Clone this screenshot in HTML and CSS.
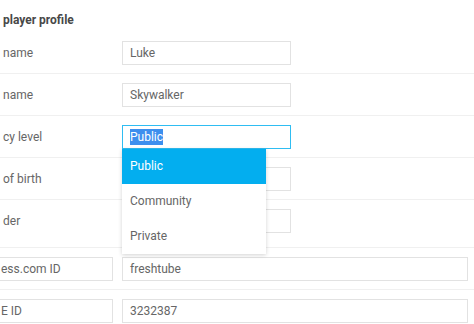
FILE: index.html
```html
<!DOCTYPE html>
<html lang="en">

<head>
    <meta charset="UTF-8">
    <meta name="viewport" content="width=device-width, initial-scale=1.0">
    <title>Player profile</title>
    <link rel="stylesheet" href="styles.css">
</head>

<body>
    <div class="page">
        <h2 class="title">player profile</h2>

        <div class="section">
            <div class="row">
                <div class="label">name</div>
                <div class="field">Luke</div>
            </div>
            <div class="row">
                <div class="label">name</div>
                <div class="field">Skywalker</div>
            </div>
            <div class="row">
                <div class="label">cy level</div>
                <div class="select-wrap">
                    <div class="field focused"><span class="selected-text">Public</span></div>
                    <ul class="dropdown">
                        <li class="active">Public</li>
                        <li>Community</li>
                        <li>Private</li>
                    </ul>
                </div>
            </div>
            <div class="row">
                <div class="label">of birth</div>
                <div class="field"></div>
            </div>
            <div class="row last">
                <div class="label">der</div>
                <div class="field"></div>
            </div>
        </div>

        <div class="section">
            <div class="row">
                <div class="field key">ess.com ID</div>
                <div class="field wide">freshtube</div>
            </div>
            <div class="row">
                <div class="field key">E ID</div>
                <div class="field wide">3232387</div>
            </div>
        </div>
    </div>
</body>

</html>
```

FILE: styles.css
```css
html, body {
    margin: 0;
    padding: 0;
    background-color: #fff;
}

body {
    font-family: Roboto, "Liberation Sans", Arial, sans-serif;
    font-size: 12px;
    color: #666;
    overflow: hidden;
}

.page {
    width: 474px;
    height: 324px;
    overflow: hidden;
}

.title {
    margin: 0;
    height: 32px;
    padding: 13px 0 0 3px;
    box-sizing: border-box;
    font-size: 12px;
    font-weight: bold;
    color: #484848;
    line-height: 14px;
}

.row {
    display: grid;
    grid-template-columns: 122px 169px;
    align-items: center;
    padding: 9px 0 8px;
    border-bottom: 1px solid #f0f0f0;
}

.row.last {
    padding-bottom: 14px;
}

.label {
    padding-left: 3px;
}

.field {
    height: 24px;
    box-sizing: border-box;
    border: 1px solid #e2e2e2;
    padding: 0 7px;
    line-height: 22px;
    color: #666;
    background-color: #fff;
}

.field.focused {
    border-color: #2fbdf2;
}

.selected-text {
    background-color: #3d8fee;
    color: #fff;
    padding: 1px 0;
}

.section + .section .row {
    grid-template-columns: 122px 346px;
}

.field.key {
    margin-left: -10px;
    width: 123px;
    padding-left: 10px;
}

.select-wrap {
    position: relative;
}

.dropdown {
    position: absolute;
    top: 24px;
    left: 0;
    width: 144px;
    margin: 0;
    padding: 0;
    list-style: none;
    background-color: #fff;
    box-shadow: 0 1px 4px rgba(0, 0, 0, 0.18);
    z-index: 5;
}

.dropdown li {
    height: 35px;
    line-height: 35px;
    padding-left: 8px;
    color: #666;
}

.dropdown li.active {
    background-color: #03aeef;
    color: #fff;
}
```
